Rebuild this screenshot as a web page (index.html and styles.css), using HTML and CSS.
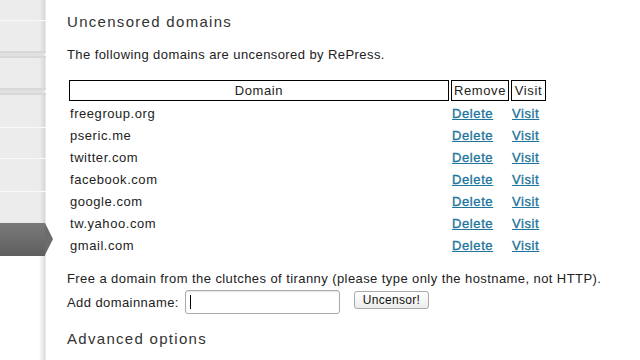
FILE: index.html
```html
<!DOCTYPE html>
<html>
<head>
<meta charset="utf-8">
<link rel="stylesheet" href="styles.css">
</head>
<body>
<div class="layout">
  <nav class="sidebar">
    <div class="menu">
      <div class="item h20"></div>
      <div class="line"></div>
      <div class="item h30"></div>
      <div class="sep"></div>
      <div class="item h30"></div>
      <div class="sep"></div>
      <div class="item h32"></div>
      <div class="line"></div>
      <div class="item h30"></div>
      <div class="line"></div>
      <div class="item h32"></div>
      <div class="line"></div>
      <div class="item h31"></div>
      <div class="active"></div>
    </div>
  </nav>
  <main class="content">
    <h2 class="title">Uncensored domains</h2>
    <p class="intro">The following domains are uncensored by RePress.</p>
    <table class="domains">
      <thead>
        <tr><th class="c-domain">Domain</th><th class="c-remove">Remove</th><th class="c-visit">Visit</th></tr>
      </thead>
      <tbody>
        <tr><td>freegroup.org</td><td><a href="#">Delete</a></td><td><a href="#">Visit</a></td></tr>
        <tr><td>pseric.me</td><td><a href="#">Delete</a></td><td><a href="#">Visit</a></td></tr>
        <tr><td>twitter.com</td><td><a href="#">Delete</a></td><td><a href="#">Visit</a></td></tr>
        <tr><td>facebook.com</td><td><a href="#">Delete</a></td><td><a href="#">Visit</a></td></tr>
        <tr><td>google.com</td><td><a href="#">Delete</a></td><td><a href="#">Visit</a></td></tr>
        <tr><td>tw.yahoo.com</td><td><a href="#">Delete</a></td><td><a href="#">Visit</a></td></tr>
        <tr><td>gmail.com</td><td><a href="#">Delete</a></td><td><a href="#">Visit</a></td></tr>
      </tbody>
    </table>
    <p class="hint">Free a domain from the clutches of tiranny (please type only the hostname, not HTTP).</p>
    <div class="add-row">
      <label class="add-label">Add domainname:</label>
      <span class="input"><span class="caret"></span></span>
      <button class="btn">Uncensor!</button>
    </div>
    <h2 class="title adv">Advanced options</h2>
  </main>
</div>
</body>
</html>
```
FILE: styles.css
```css
html, body {
  margin: 0;
  padding: 0;
  background: #fff;
}
body {
  font-family: "Liberation Sans", Arial, sans-serif;
  font-size: 13px;
  letter-spacing: 0.42px;
  color: #222;
  width: 640px;
  height: 360px;
  overflow: hidden;
}
.layout {
  display: flex;
  height: 360px;
}
.sidebar {
  width: 46px;
  flex: none;
  background: linear-gradient(to right, #fff 0, #fff 39px, #f2f2f2 41px, #e4e4e4 44px, #d6d6d6 45px, #fff 46px);
}
.menu {
  display: flex;
  flex-direction: column;
  width: 46px;
}
.item {
  background: linear-gradient(to right, #ececec 0, #ececec 39px, #e4e4e4 42px, #d6d6d6 45px, #fff 46px);
}
.h20 { height: 20px; }
.h30 { height: 30px; }
.h31 { height: 31px; }
.h32 { height: 32px; }
.line {
  height: 1px;
  background: linear-gradient(to right, #fafafa 0, #fafafa 44px, #fff 46px);
}
.sep {
  height: 3px;
  background: linear-gradient(to right, #e0e0e0 0, #e0e0e0 44px, #fff 46px);
  border-top: 2px solid #d8d8d8;
  border-bottom: 2px solid #d8d8d8;
}
.active {
  height: 33px;
  width: 45px;
  position: relative;
  background: linear-gradient(to bottom, #7a7a7a, #5e5e5e);
}
.active::after {
  content: "";
  position: absolute;
  right: -8px;
  top: 0;
  border-left: 8px solid #6c6c6c;
  border-top: 16.5px solid transparent;
  border-bottom: 16.5px solid transparent;
}
.content {
  padding-left: 21px;
  flex: 1;
}
.title {
  font-size: 15px;
  font-weight: normal;
  color: #333;
  letter-spacing: 1.3px;
  margin: 13px 0 0 0;
  line-height: 18px;
}
.intro {
  margin: 16px 0 0 0;
  line-height: 16px;
}
.domains {
  border-collapse: separate;
  border-spacing: 2px;
  margin-top: 15px;
  width: 481px;
}
.domains th {
  border: 1px solid #000;
  font-weight: normal;
  height: 19px;
  padding: 0 1px;
  letter-spacing: 0.6px;
}
.c-domain { width: 377px; }
.c-remove { width: 54px; }
.c-visit { width: 31px; }
.domains td {
  height: 20px;
  padding: 0 1px;
  letter-spacing: 0.55px;
}
.domains a {
  color: #21759b;
  text-decoration: underline;
  -webkit-text-stroke: 0.35px #21759b;
  letter-spacing: 0.6px;
}
.hint {
  margin: 12px 0 0 0;
  line-height: 20px;
}
.add-row {
  display: flex;
  align-items: center;
  margin-top: 1px;
}
.add-label { margin-right: 6px; }
.input {
  width: 149px;
  height: 22px;
  border: 1px solid #aaa;
  border-radius: 3px;
  box-shadow: inset 0 1px 1px rgba(0,0,0,0.1);
  display: flex;
  align-items: center;
  padding-left: 4px;
}
.caret {
  width: 1px;
  height: 14px;
  background: #000;
}
.btn {
  margin-left: 14px;
  align-self: flex-start;
  margin-top: 1px;
  height: 18px;
  padding: 0 8px;
  font-family: "Liberation Sans", Arial, sans-serif;
  font-size: 12px;
  letter-spacing: 0.3px;
  color: #111;
  background: linear-gradient(#fff, #ececec);
  border: 1px solid #aaa;
  border-radius: 3px;
}
.adv { margin-top: 16px; }
```
